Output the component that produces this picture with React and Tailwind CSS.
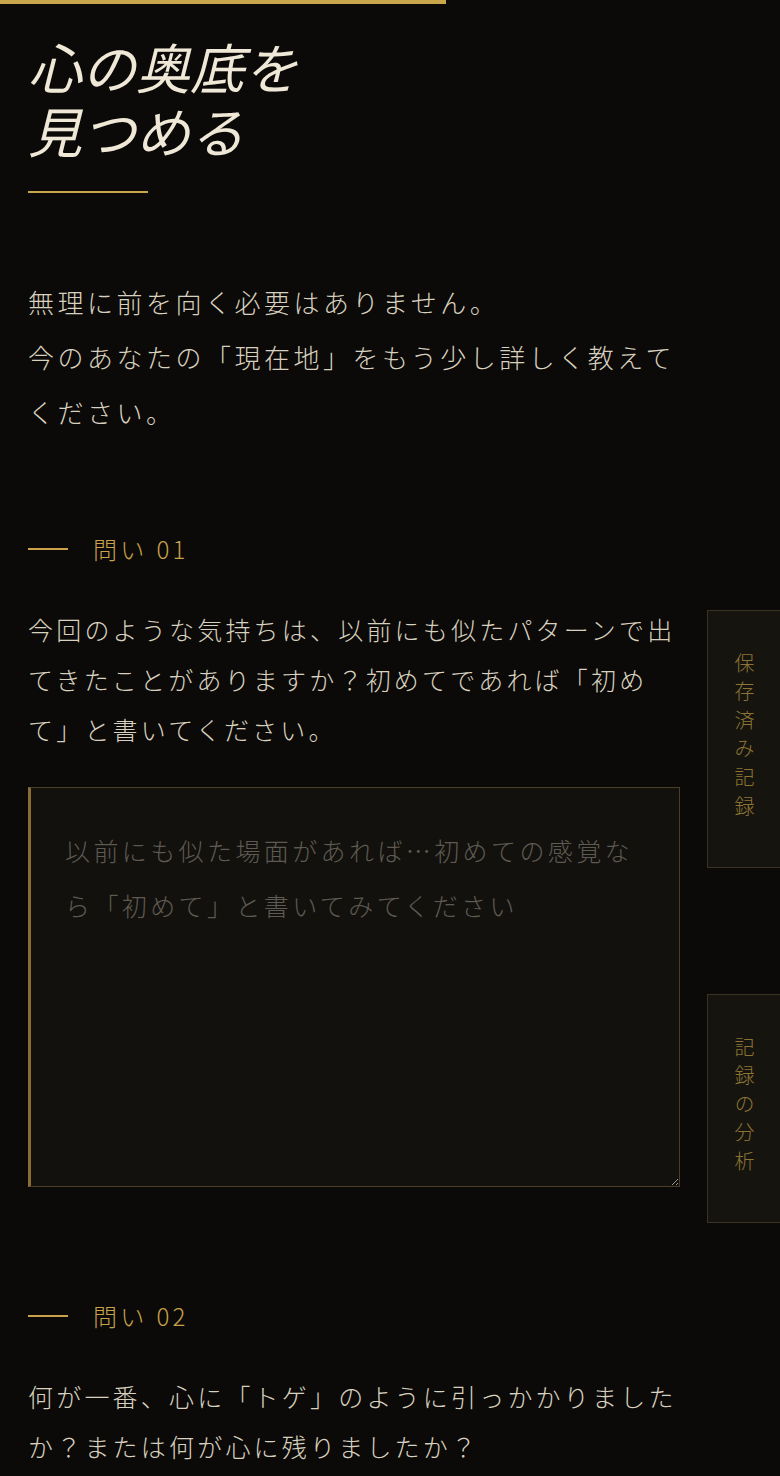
const jp = { fontFamily: '"Noto Sans CJK JP", "Noto Sans", sans-serif' };

function QuestionLabel({ num }) {
  return (
    <div className="flex items-center h-8">
      <span className="block w-10 h-[2px] bg-[#c9a24a]" />
      <span className="ml-[25px] text-[24px] leading-8 tracking-[0.14em] font-light text-[#c9a24a]">
        問い {num}
      </span>
    </div>
  );
}

function SideTab({ label }) {
  return (
    <button className="w-[73px] py-[42px] flex justify-center bg-[#15140f] border border-r-0 border-[#3a3222]">
      <span className="[writing-mode:vertical-rl] text-[20px] leading-none tracking-[8.6px] font-light text-[#8e7434]">
        {label}
      </span>
    </button>
  );
}

export default function App() {
  return (
    <div className="relative min-h-screen bg-[#0b0a09] text-[#d9d1bf] overflow-hidden" style={jp}>
      {/* progress bar */}
      <div className="h-1 w-[446px] bg-[#c9a64a]" />

      <main className="pl-7 pr-[100px] pb-20">
        <h1 className="pt-[30px] text-[54px] leading-[64px] italic font-normal text-[#efe8d6]">
          心の奥底を
          <br />
          見つめる
        </h1>
        <div className="mt-[29px] w-[120px] h-[2px] bg-[#c9a64a]" />

        <p className="mt-[81px] text-[26px] leading-[55px] tracking-[3.5px] font-light">
          無理に前を向く必要はありません。
          <br />
          今のあなたの「現在地」をもう少し詳しく教えてください。
        </p>

        {/* question 1 */}
        <section className="mt-[94px]">
          <QuestionLabel num="01" />
          <p className="mt-[39px] text-[25px] leading-[50px] tracking-[3.2px] font-light">
            今回のような気持ちは、以前にも似たパターンで出てきたことがありますか？初めてであれば「初めて」と書いてください。
          </p>
          <textarea
            className="mt-[33px] block w-full h-[400px] bg-[#12110e] border border-[#4a3f26] border-l-[3px] border-l-[#8a6d35] pl-[34px] pr-[30px] pt-[35px] text-[25px] leading-[55px] tracking-[3.4px] font-light text-[#d9d1bf] placeholder:text-[#5e5a51] outline-none resize-y"
            placeholder="以前にも似た場面があれば…初めての感覚なら「初めて」と書いてみてください"
          />
        </section>

        {/* question 2 */}
        <section className="mt-[113px]">
          <QuestionLabel num="02" />
          <p className="mt-[39px] text-[25px] leading-[50px] tracking-[3.2px] font-light">
            何が一番、心に「トゲ」のように引っかかりましたか？または何が心に残りましたか？
          </p>
        </section>
      </main>

      {/* floating side tabs */}
      <div className="absolute top-[610px] right-0">
        <SideTab label="保存済み記録" />
      </div>
      <div className="absolute top-[994px] right-0">
        <SideTab label="記録の分析" />
      </div>
    </div>
  );
}
